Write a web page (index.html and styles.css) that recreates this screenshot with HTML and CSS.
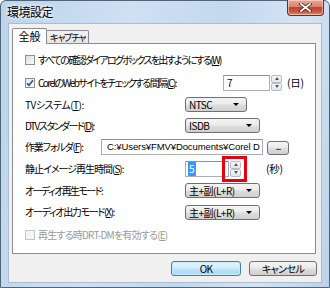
FILE: index.html
```html
<!DOCTYPE html>
<html lang="ja">
<head>
<meta charset="utf-8">
<title>環境設定</title>
<link rel="stylesheet" href="styles.css">
</head>
<body>
<div class="window">
  <div class="titlebar">
    <span class="title">環境設定</span>
    <div class="close">
      <svg width="15" height="9" viewBox="0 0 15 9"><path d="M3 1 L12 8 M12 1 L3 8" stroke="#4a1a1a" stroke-width="3.4" stroke-linecap="square"/><path d="M3 1 L12 8 M12 1 L3 8" stroke="#fff" stroke-width="1.8" stroke-linecap="square"/></svg>
    </div>
  </div>
  <div class="client">
    <div class="tabs">
      <div class="tab active">全般</div>
      <div class="tab">キャプチャ</div>
    </div>
    <div class="panel">
      <div class="rows">
        <div class="row">
          <span class="check"></span>
          <span class="label ls-17">すべての確認ダイアログボックスを出すようにする(<u>W</u>)</span>
        </div>
        <div class="row">
          <div class="check-label">
            <span class="check checked"><svg width="8" height="8" viewBox="0 0 8 8"><path d="M1 4.2 L3 6.3 L7 1.2" fill="none" stroke="#2a4f9c" stroke-width="1.6"/></svg></span>
            <span class="label ls-16">CorelのWebサイトをチェックする間隔(<u>C</u>):</span>
          </div>
          <div class="field spin-field">7</div>
          <div class="spin"><span class="spin-btn"><i class="up"></i></span><span class="spin-btn"><i class="down"></i></span></div>
          <span class="unit">(日)</span>
        </div>
        <div class="row">
          <span class="label col ls-05">TVシステム(<u>T</u>):</span>
          <div class="select narrow">NTSC<i class="arrow"></i></div>
        </div>
        <div class="row">
          <span class="label col ls-15">DTVスタンダード(<u>D</u>):</span>
          <div class="select">ISDB<i class="arrow"></i></div>
        </div>
        <div class="row">
          <span class="label col-short ls-12">作業フォルダ(<u>F</u>):</span>
          <div class="field path">C:¥Users¥FMV¥Documents¥Corel D</div>
          <div class="browse">...</div>
        </div>
        <div class="row">
          <span class="label col ls-10">静止イメージ再生時間(<u>S</u>):</span>
          <div class="field sec-field"><span class="sel">5</span></div>
          <div class="spin marked"><span class="spin-btn"><i class="up"></i></span><span class="spin-btn"><i class="down"></i></span></div>
          <span class="unit sec">(秒)</span>
        </div>
        <div class="row">
          <span class="label col ls-16">オーディオ再生モード:</span>
          <div class="select">主+副(L+R)<i class="arrow"></i></div>
        </div>
        <div class="row">
          <span class="label col ls-13">オーディオ出力モード(<u>X</u>):</span>
          <div class="select">主+副(L+R)<i class="arrow"></i></div>
        </div>
        <div class="row disabled">
          <span class="check off"></span>
          <span class="label ls-08">再生する時DRT-DMを有効する(<u>E</u>)</span>
        </div>
      </div>
    </div>
    <div class="buttons">
      <div class="btn default">OK</div>
      <div class="btn">キャンセル</div>
    </div>
  </div>
</div>
</body>
</html>
```

FILE: styles.css
```css
*, *::before, *::after { box-sizing: border-box; }
html, body { margin: 0; padding: 0; background: #fff; }
body {
  font-family: "Noto Sans CJK JP", "Noto Sans", sans-serif;
  font-size: 10px;
  color: #000;
  font-feature-settings: "palt";
}
u { text-decoration: underline; text-underline-offset: 1px; }

.window {
  width: 330px;
  height: 288px;
  border: 1px solid #50647c;
  border-radius: 6px 6px 0 0;
  background: linear-gradient(100deg, #bcd3eb 0%, #cfe0f2 35%, #c3d8ee 60%, #d5e4f4 80%, #bcd2ea 100%);
  padding: 0 7px 4px 7px;
  display: flex;
  flex-direction: column;
}

.titlebar {
  height: 22px;
  display: flex;
  justify-content: space-between;
  align-items: flex-start;
}
.title {
  margin-top: 3px;
  margin-left: -1px;
  font-size: 12px;
  line-height: 16px;
  letter-spacing: -0.5px;
  text-shadow: 0 0 4px #fff, 0 0 4px #fff;
}
.close {
  width: 37px;
  height: 16px;
  margin-right: -2px;
  margin-top: -1px;
  border: 1px solid #6a2c2a;
  border-top: none;
  border-radius: 0 0 4px 4px;
  background: linear-gradient(#e9a99c 0%, #d9826f 45%, #c5432f 50%, #cc5a44 80%, #e08d70 100%);
  box-shadow: inset 0 0 0 1px rgba(255,220,210,0.6);
  display: flex;
  align-items: center;
  justify-content: center;
}

.client {
  flex: 1;
  background: #f0f0f0;
  border: 1px solid #a9bcd2;
  padding: 4px 5px 0 3px;
  display: flex;
  flex-direction: column;
}

.tabs {
  display: flex;
  align-items: flex-end;
  height: 16px;
  margin-bottom: -1px;
}
.tab {
  height: 14px;
  width: 43px;
  margin-left: -1px;
  border: 1px solid #898c95;
  border-bottom: none;
  border-radius: 2px 2px 0 0;
  background: linear-gradient(#f2f2f2, #e4e4e4);
  font-size: 9.5px;
  line-height: 12px;
  text-align: center;
  letter-spacing: -1.3px;
  white-space: nowrap;
}
.tab.active {
  height: 16px;
  width: 35px;
  margin-left: 0;
  background: #fff;
  position: relative;
  z-index: 1;
  font-size: 11px;
  line-height: 15px;
  letter-spacing: 0;
}

.panel {
  height: 211px;
  border: 1px solid #898c95;
  background: #fff;
  padding: 5px 0 0 12px;
}

.rows {
  display: grid;
  grid-template-rows: 22px 23px 21px 21px 21px 23px 21px 22px 23px;
}
.row {
  display: flex;
  align-items: center;
  white-space: nowrap;
}
.label { line-height: 14px; }
.ls-17 { letter-spacing: -1.7px; }
.ls-16 { letter-spacing: -1.6px; }
.ls-15 { letter-spacing: -1.5px; }
.ls-13 { letter-spacing: -1.3px; }
.ls-12 { letter-spacing: -1.2px; }
.ls-10 { letter-spacing: -1px; }
.ls-08 { letter-spacing: -0.8px; }
.ls-05 { letter-spacing: -0.5px; }
.col { width: 160px; flex: none; }
.col-short { width: 76px; flex: none; }
.check-label { width: 198px; flex: none; display: flex; align-items: center; }

.check {
  width: 10px;
  height: 10px;
  flex: none;
  margin-right: 3px;
  border: 1px solid #8e8f8f;
  background: linear-gradient(135deg, #dcdcdc, #fbfbfb);
  display: flex;
  align-items: center;
  justify-content: center;
}
.check.checked { background: linear-gradient(135deg, #e4e4e4, #ffffff); }
.check.off { border-color: #c4c4c4; background: #f4f4f4; }
.disabled .label { color: #9a9a9a; }

.field {
  height: 16px;
  border: 1px solid #abadb3;
  border-top-color: #8d9097;
  background: #fff;
  line-height: 14px;
  padding-left: 3px;
  overflow: hidden;
  white-space: nowrap;
}
.spin-field { width: 47px; }
.sec-field { width: 44px; padding-left: 2px; }
.sel { background: #3399ff; color: #fff; padding: 0 1px; }
.path {
  width: 162px;
  font-family: "Liberation Sans", Arial, sans-serif;
  font-size: 9.5px;
  letter-spacing: -0.1px;
  padding-left: 5px;
}

.spin {
  width: 11px;
  height: 16px;
  margin-left: 1px;
  display: flex;
  flex-direction: column;
}
.spin.marked { position: relative; }
.spin.marked::after {
  content: "";
  position: absolute;
  left: -8px;
  top: -5px;
  width: 25px;
  height: 26px;
  border: 3px solid #e8000e;
}
.spin-btn {
  flex: 1;
  border: 1px solid #b7bcc4;
  border-radius: 2px;
  background: linear-gradient(#f7f8fa, #e2e6eb);
  display: flex;
  align-items: center;
  justify-content: center;
}
.spin-btn i {
  width: 0;
  height: 0;
  border-left: 2.5px solid transparent;
  border-right: 2.5px solid transparent;
}
.spin-btn i.up { border-bottom: 3px solid #4d5a6c; }
.spin-btn i.down { border-top: 3px solid #4d5a6c; }

.unit { margin-left: 5px; letter-spacing: -0.3px; font-size: 10.5px; }
.unit.sec { margin-left: 25px; }

.select {
  width: 75px;
  height: 15px;
  border: 1px solid #707070;
  border-radius: 3px;
  background: linear-gradient(#f4f4f4 0%, #ebebeb 45%, #dddddd 55%, #cfcfcf 100%);
  padding-left: 3px;
  line-height: 13px;
  display: flex;
  align-items: center;
  justify-content: space-between;
  font-size: 10px;
  letter-spacing: -0.5px;
}
.select.narrow { width: 62px; }
.arrow {
  width: 0;
  height: 0;
  margin-right: 7px;
  border-left: 3px solid transparent;
  border-right: 3px solid transparent;
  border-top: 3px solid #000;
}

.browse {
  width: 22px;
  height: 14px;
  margin-left: 4px;
  margin-top: 2px;
  border: 1px solid #707070;
  border-radius: 3px;
  background: linear-gradient(#f4f4f4 0%, #ebebeb 45%, #dddddd 55%, #cfcfcf 100%);
  font-size: 9px;
  line-height: 10px;
  text-align: center;
  letter-spacing: -1px;
}

.buttons {
  display: flex;
  justify-content: flex-end;
  gap: 8px;
  margin-top: 7px;
  margin-right: -1px;
}
.btn {
  width: 68px;
  height: 15px;
  border: 1px solid #707070;
  border-radius: 3px;
  background: linear-gradient(#f4f4f4 0%, #ebebeb 45%, #dddddd 55%, #cfcfcf 100%);
  text-align: center;
  line-height: 13px;
  font-size: 10px;
  letter-spacing: -0.6px;
}
.btn.default {
  width: 70px;
  border-color: #3c7fb1;
  background: linear-gradient(#e5f4fc 0%, #d4edfb 45%, #bde4f9 55%, #a7d9f5 100%);
  box-shadow: inset 0 0 0 1px #c6ecfb;
}
```
